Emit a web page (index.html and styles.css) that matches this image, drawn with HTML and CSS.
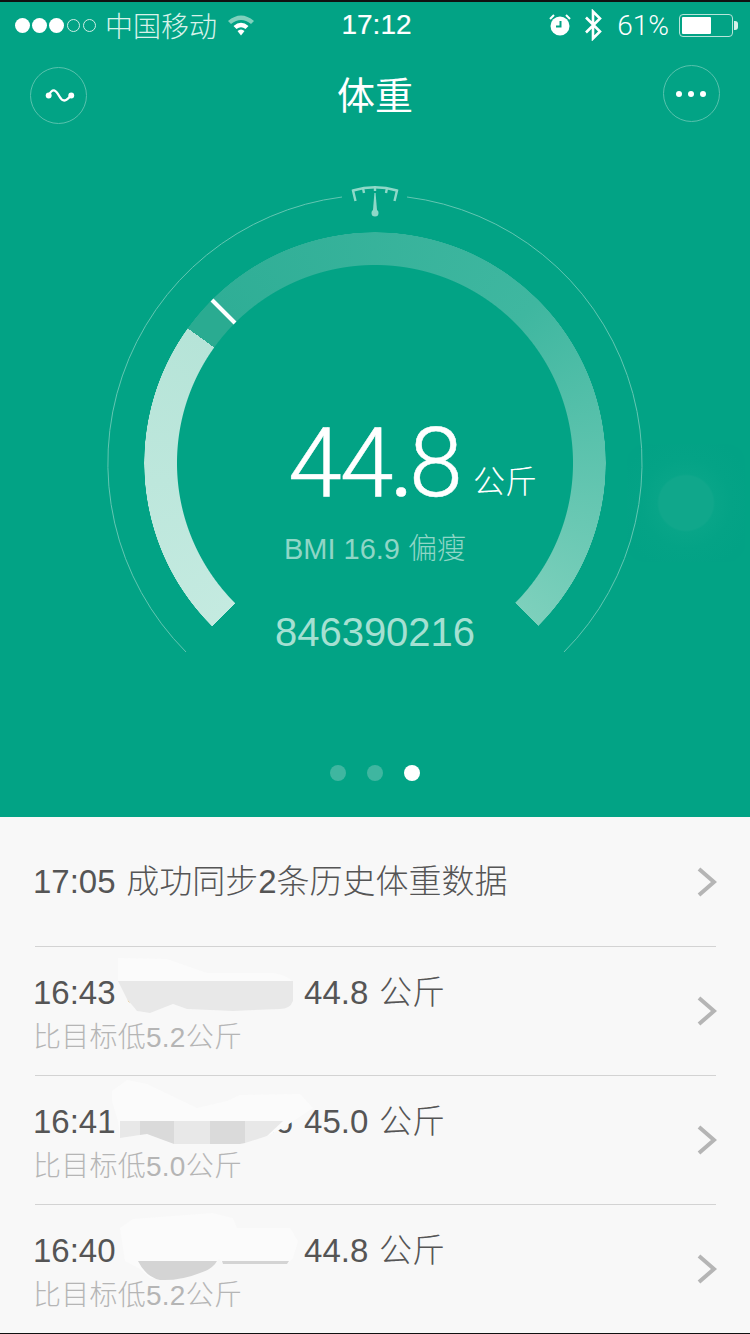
FILE: index.html
```html
<!DOCTYPE html>
<html lang="zh">
<head>
<meta charset="utf-8">
<title>体重</title>
<link rel="stylesheet" href="styles.css">
</head>
<body>
<div class="screen">
  <section class="hero">
    <div class="status">
      <div class="status-left">
        <span class="signal"><i class="on"></i><i class="on"></i><i class="on"></i><i class="off"></i><i class="off"></i></span>
        <span class="carrier">中国移动</span>
        <svg class="wifi" viewBox="0 0 30 24"><path class="wifi-dim" d="M2 8 Q15 -3 28 8 L25 11 Q15 3 5 11Z"/><path class="wifi-on" d="M7.5 13 Q15 6.5 22.500 13 L19.500 16 Q15 12.500 10.500 16Z"/><path class="wifi-on" d="M11.500 18 Q15 15 18.500 18 L15 22.500Z"/></svg>
      </div>
      <div class="time">17:12</div>
      <div class="status-right">
        <svg class="alarm" viewBox="0 0 24 24"><circle cx="12" cy="13" r="9.500" fill="#fff"/><path d="M2 6 L6 2 M22 6 L18 2" stroke="#fff" stroke-width="2" fill="none"/><path d="M12.500 8 V13.500 H8" stroke="#02a385" stroke-width="2" fill="none"/></svg>
        <svg class="bt" viewBox="0 0 20 32"><path d="M3 8.500 L17 22.500 L10 29.500 V2.500 L17 9.500 L3 23.500" stroke="#fff" stroke-width="2.600" fill="none"/></svg>
        <span class="pct">61%</span>
        <span class="battery"><span class="battery-fill"></span></span>
        <span class="battery-nub"></span>
      </div>
    </div>
    <header class="nav">
      <button class="round-btn"><svg viewBox="0 0 56 56" class="btn-icon"><path d="M18 28 C22 20 25 22 29 29 S36 33 41 28" stroke="#fff" stroke-width="2.400" fill="none"/><circle cx="18" cy="28" r="3" fill="#fff"/><circle cx="41" cy="28" r="3" fill="#fff"/></svg></button>
      <h1 class="title">体重</h1>
      <button class="round-btn btn-more"><i></i><i></i><i></i></button>
    </header>
    <div class="gauge">
      <div class="glow"></div>
      <div class="ring"></div>
      <svg class="gauge-lines" viewBox="0 130 750 530">
        <path class="thin" d="M342 197 A268 268 0 0 0 186 652"/>
        <path class="thin" d="M407 197 A268 268 0 0 1 564 652"/>
        <path class="tick" d="M212 300 L235 323"/>
        <g class="scale">
          <path d="M355.500 201 L353 190.500 Q375 184 397 190.500 L394.500 201"/>
          <path d="M363 188 L364 193 M387 188 L386 193 M375 187 V191"/>
        </g>
        <path class="needle" d="M374.400 193 H375.600 L377 210 H373Z"/>
        <circle class="needle" cx="375" cy="213" r="3.500"/>
      </svg>
      <div class="readout">
        <div class="weight"><span class="weight-num">44<span class="weight-dot">.</span>8</span><span class="weight-unit">公斤</span></div>
        <div class="bmi">BMI 16.9 偏瘦</div>
        <div class="device">846390216</div>
      </div>
    </div>
    <div class="pager"><i></i><i></i><i class="active"></i></div>
  </section>
  <section class="list">
    <div class="row row-single">
      <div class="row-text"><div class="main">17:05 成功同步2条历史体重数据</div></div>
      <svg class="chev" viewBox="0 0 20 30"><path d="M2 2 L17 15 L2 28"/></svg>
    </div>
    <div class="row">
      <div class="row-text"><div class="main">16:43 <span class="device-id">846390216</span> 44.8 公斤</div><div class="sub">比目标低5.2公斤</div></div>
      <svg class="chev" viewBox="0 0 20 30"><path d="M2 2 L17 15 L2 28"/></svg>
      <svg class="scribble" viewBox="110 946 210 80">
        <path class="s-light" d="M118 957 L167 958 L207 972 L273 972 Q290 975 293 982 L293 1000 Q290 1008 280 1008 L233 1010 L187 1008 L173 1003 L150 1012 L137 1010 L127 998 L118 980Z"/>
        <path class="s-a" d="M118 980 H293 V1000 Q290 1008 280 1008 L233 1010 L187 1008 L173 1003 L150 1012 L137 1010 L127 998Z"/>
      </svg>
    </div>
    <div class="row">
      <div class="row-text"><div class="main">16:41 <span class="device-id">846390216</span> 45.0 公斤</div><div class="sub">比目标低5.0公斤</div></div>
      <svg class="chev" viewBox="0 0 20 30"><path d="M2 2 L17 15 L2 28"/></svg>
      <svg class="scribble" viewBox="110 1075 210 80">
        <path class="s-light" d="M112 1090 L127 1079 L147 1083 L197 1107 L227 1100 L240 1094 L300 1093 L313 1107 L283 1127 L267 1135 L240 1143 L173 1143 L147 1133 L120 1137 L118 1120 L112 1100Z"/>
        <path class="s-a" d="M120 1120 H140 V1134 L120 1137Z"/>
        <path class="s-b" d="M140 1120 H174 V1143 L147 1133 L140 1134Z"/>
        <path class="s-a" d="M174 1120 H210 V1143 H174Z"/>
        <path class="s-b" d="M210 1120 H245 V1142 L240 1143 H210Z"/>
        <path class="s-a" d="M245 1120 H283 L267 1135 L245 1142Z"/>
      </svg>
    </div>
    <div class="row">
      <div class="row-text"><div class="main">16:40 <span class="device-id">846390216</span> 44.8 公斤</div><div class="sub">比目标低5.2公斤</div></div>
      <svg class="chev" viewBox="0 0 20 30"><path d="M2 2 L17 15 L2 28"/></svg>
      <svg class="scribble" viewBox="110 1204 210 80">
        <path class="s-light" d="M120 1227 L133 1218 L213 1212 L233 1217 L237 1227 L290 1227 L298 1240 L293 1257 L287 1263 L223 1263 L219 1258 L213 1265 L180 1278 L150 1277 L140 1268 L125 1260Z"/>
        <path class="s-c" d="M138 1260 H217 Q213 1268 200 1272 Q180 1280 160 1279 Q146 1276 138 1260Z"/>
        <path class="s-c" d="M222 1260 H289 L287 1263 H223Z"/>
      </svg>
    </div>
  </section>
</div>
</body>
</html>
```
FILE: styles.css
```css
* { box-sizing: border-box; }
html, body { margin: 0; padding: 0; background: #111; }
.screen {
  width: 750px;
  height: 1334px;
  overflow: hidden;
  padding: 2px 0 2px;
  display: flex;
  flex-direction: column;
  font-family: "Liberation Sans", "Noto Sans CJK SC", sans-serif;
}
.hero {
  height: 815px;
  flex: none;
  background: #02a385;
  color: #fff;
  display: flex;
  flex-direction: column;
}

/* status bar */
.status {
  height: 46px;
  flex: none;
  display: grid;
  grid-template-columns: 1fr auto 1fr;
  align-items: center;
  padding: 0 12px 0 15px;
}
.status-left, .status-right { display: flex; align-items: center; }
.status-right { justify-content: flex-end; }
.signal { display: flex; align-items: center; gap: 2px; }
.signal i { display: block; border-radius: 50%; }
.signal .on { width: 15px; height: 15px; background: #fff; }
.signal .off { width: 13px; height: 13px; border: 1px solid #cfeee6; margin-left: 1px; }
.carrier { font-size: 28px; font-weight: 300; margin-left: 9px; color: #d8f2ea; }
.wifi { width: 30px; height: 24px; margin-left: 9px; }
.wifi-dim { fill: #7fd1bd; }
.wifi-on { fill: #fff; }
.time { font-size: 28px; font-weight: 400; -webkit-text-stroke: 0.2px #fff; }
.alarm { width: 24px; height: 24px; margin-right: 11px; }
.bt { width: 20px; height: 32px; margin-right: 14px; }
.pct { font-size: 28px; font-family: Roboto, "Liberation Sans", sans-serif; font-weight: 300; margin-right: 10px; }
.battery {
  width: 54px;
  height: 23px;
  border: 1.500px solid #b8e5da;
  border-radius: 4px;
  padding: 2px;
  display: flex;
}
.battery-fill { width: 29px; background: #fff; border-radius: 1px; }
.battery-nub { width: 4px; height: 9px; background: #d5f0e9; border-radius: 0 3px 3px 0; margin-left: 1px; }

/* nav */
.nav {
  height: 82px;
  flex: none;
  display: flex;
  align-items: center;
  justify-content: space-between;
  padding: 13px 30px 0 30px;
}
.round-btn {
  width: 57px;
  height: 57px;
  padding: 0;
  border: 1px solid #58c2ad;
  border-radius: 50%;
  background: transparent;
  display: flex;
  align-items: center;
  justify-content: center;
}
.btn-icon { width: 55px; height: 55px; }
.btn-more { gap: 6px; margin-top: -4px; }
.btn-more i { width: 6px; height: 6px; border-radius: 50%; background: #fff; }
.title { margin: 0; font-size: 38px; font-weight: 400; line-height: 1; }

/* gauge */
.gauge { position: relative; height: 530px; flex: none; }
.gauge-lines { position: absolute; left: 0; top: 0; width: 750px; height: 530px; }
.thin { fill: none; stroke: #63c6b2; stroke-width: 1; }
.tick { fill: none; stroke: #fff; stroke-width: 4; }
.scale path { fill: none; stroke: #8fd8c8; stroke-width: 2.400; }
.needle { fill: #8fd8c8; }
.ring {
  position: absolute;
  left: 144px;
  top: 102px;
  width: 462px;
  height: 462px;
  border-radius: 50%;
  background: conic-gradient(from 225deg,
    #c4eae0 0deg, #b6e4d8 80.7deg,
    #2aab91 80.7deg, #2aab91 90deg,
    #2fae96 90deg, #3fb7a0 180deg, #7dd0bc 270deg,
    transparent 270deg);
  -webkit-mask: radial-gradient(closest-side, transparent 197.500px, #000 198.500px, #000 230.500px, transparent 231px);
  mask: radial-gradient(closest-side, transparent 197.500px, #000 198.500px, #000 230.500px, transparent 231px);
}
.glow {
  position: absolute;
  left: 627px;
  top: 314px;
  width: 118px;
  height: 118px;
  border-radius: 18px;
  background: radial-gradient(circle, #10a78b 0, #10a78b 27px, #08a588 29px, #04a386 45px, #02a285 70px);
}
.readout {
  position: absolute;
  left: 0;
  right: 0;
  top: 278px;
  display: flex;
  flex-direction: column;
  align-items: center;
}
.weight {
  display: flex;
  align-items: baseline;
  height: 110px;
  padding-left: 75px;
}
.weight-num {
  font-family: Roboto, "Liberation Sans", sans-serif;
  font-weight: 300;
  font-size: 97px;
  line-height: 110px;
  letter-spacing: -2px;
  -webkit-text-stroke: 0.5px #fff;
}
.weight-dot { font-size: 70px; font-weight: 500; letter-spacing: -2px; }
.weight-unit { font-size: 32px; font-weight: 300; margin-left: 12px; position: relative; top: -3px; }
.bmi { font-size: 29px; line-height: 34px; color: #8fd6c6; margin-top: 14px; font-weight: 300; }
.device { font-size: 40px; line-height: 46px; color: #a5e0d2; margin-top: 43px; }

/* pager */
.pager {
  margin-top: auto;
  padding-bottom: 36px;
  display: flex;
  justify-content: center;
  gap: 21px;
}
.pager i { width: 16px; height: 16px; border-radius: 50%; background: #3fb6a0; }
.pager .active { background: #fff; }

/* list */
.list { flex: 1; background: #f8f8f8; padding: 0 34px; }
.row {
  position: relative;
  height: 129px;
  display: flex;
  align-items: center;
  justify-content: space-between;
  border-top: 1px solid #d3d3d3;
}
.row-single { height: 129px; border-top: 0; }
.row:not(.row-single) { margin-left: 1px; }
.row .row-text { margin-left: -1px; }
.row:not(.row-single) .row-text { margin-left: -2px; margin-top: 7px; }
.row-text { min-width: 0; }
.main { font-size: 33px; line-height: 40px; color: #555; font-weight: 300; white-space: nowrap; word-spacing: 1.5px; }
.device-id { letter-spacing: 0.22px; }
.sub { font-size: 28px; line-height: 36px; color: #b5b5b5; margin-top: 7px; font-weight: 300; letter-spacing: 0.25px; }
.chev { width: 20px; height: 30px; flex: none; margin-right: -1px; }
.chev path { fill: none; stroke: #b5b5b5; stroke-width: 4; }
.scribble { position: absolute; left: 75px; top: 0; width: 210px; height: 80px; }
.s-light { fill: #fbfbfb; }
.s-a { fill: #e8e8e8; }
.s-b { fill: #dadada; }
.s-c { fill: #d4d4d4; }
```
